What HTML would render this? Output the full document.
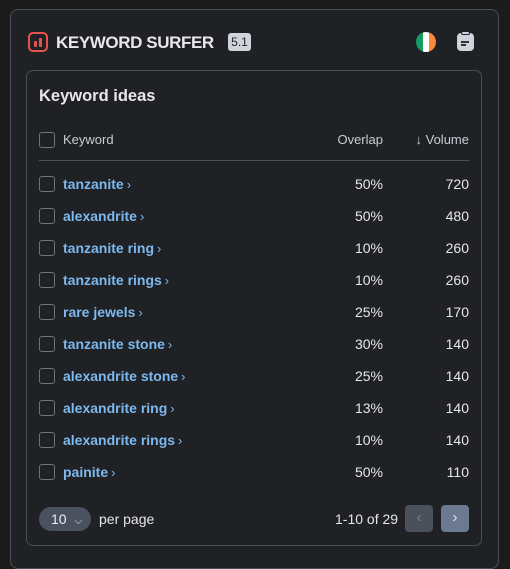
<!DOCTYPE html>
<html><head><style>
*{box-sizing:border-box;margin:0;padding:0}
body{width:510px;height:554px;background:#1b1b1c;font-family:"Liberation Sans",sans-serif;position:relative;overflow:hidden;color:#e5e7eb}
.outer{position:absolute;left:10px;top:9px;width:489px;height:560px;border:1px solid #4a4f57;border-radius:8px;background:#202124}
.logo{position:absolute;left:28px;top:32px;width:20px;height:20px;border:2.5px solid #e5534b;border-radius:5px}
.logo i{position:absolute;bottom:3px;width:2.5px;background:#e5534b;border-radius:1px}
.brand{position:absolute;left:56px;top:33px;font-size:17px;font-weight:bold;color:#e8e8ea;letter-spacing:-0.4px}
.ver{position:absolute;left:228px;top:33px;width:23px;height:18px;background:#cfd4dc;border-radius:3px;color:#222;font-size:12px;text-align:center;line-height:18px}
.flag{position:absolute;left:416px;top:32px;width:20px;height:20px;border-radius:50%;overflow:hidden;display:flex}
.flag span{flex:1}
.clip{position:absolute;left:457px;top:33px;width:17px;height:18px;background:#cfd4dc;border-radius:4px}
.card{position:absolute;left:26px;top:70px;width:456px;height:476px;border:1px solid #4a4f57;border-radius:7px}
.title{position:absolute;left:39px;top:87px;font-size:16.5px;font-weight:bold;color:#e8e8ea}
.cb{position:absolute;left:39px;width:16px;height:16px;border:1.3px solid #6b7280;border-radius:3px}
.row{position:absolute;left:0;width:510px;font-size:14px;height:20px;line-height:20px}
.kw{position:absolute;left:63px;color:#7cb9f0;font-weight:bold}
.kw b{font-weight:normal;color:#7cb9f0;font-size:13px;margin-left:3px}
.ov{position:absolute;right:127px;color:#e5e7eb}
.vo{position:absolute;right:41px;color:#e5e7eb}
.hd{color:#c7ccd4;font-size:13px}
.line{position:absolute;left:39px;top:160px;width:430px;height:1px;background:#4a4f57}
.sel{position:absolute;left:39px;top:507px;width:52px;height:24px;background:#4a5160;border-radius:12px;font-size:14px;line-height:24px;padding-left:12px;color:#eee}
.pp{position:absolute;left:99px;top:511px;font-size:14px;color:#e5e7eb}
.cnt{position:absolute;left:335px;top:511px;font-size:14px;color:#e5e7eb}
.btn{position:absolute;top:505px;width:28px;height:27px;border-radius:4px;text-align:center;line-height:26px;font-size:15px}
</style></head><body>
<div class="outer"></div>
<div class="logo"><i style="left:4px;height:6px"></i><i style="left:9px;height:9px"></i></div>
<div class="brand">KEYWORD SURFER</div>
<div class="ver">5.1</div>
<div class="flag"><span style="background:#169b62"></span><span style="background:#fff"></span><span style="background:#ff883e"></span></div>
<div class="clip"><div style="position:absolute;left:4px;top:-2px;width:9px;height:4px;background:#cfd4dc;border:1px solid #202124;border-radius:2px"></div><div style="position:absolute;left:4px;top:8px;width:8px;height:1.5px;background:#333"></div><div style="position:absolute;left:4px;top:11px;width:5px;height:1.5px;background:#333"></div></div>
<div class="card"></div>
<div class="title">Keyword ideas</div>
<div class="cb" style="top:132px"></div>
<div class="row" style="top:130px"><span class="kw hd" style="font-weight:normal;color:#c7ccd4">Keyword</span><span class="ov hd">Overlap</span><span class="vo hd">↓ Volume</span></div>
<div class="line"></div>

<div class="cb" style="top:176px"></div><div class="row" style="top:174px"><span class="kw">tanzanite<b>›</b></span><span class="ov">50%</span><span class="vo">720</span></div>
<div class="cb" style="top:208px"></div><div class="row" style="top:206px"><span class="kw">alexandrite<b>›</b></span><span class="ov">50%</span><span class="vo">480</span></div>
<div class="cb" style="top:240px"></div><div class="row" style="top:238px"><span class="kw">tanzanite ring<b>›</b></span><span class="ov">10%</span><span class="vo">260</span></div>
<div class="cb" style="top:272px"></div><div class="row" style="top:270px"><span class="kw">tanzanite rings<b>›</b></span><span class="ov">10%</span><span class="vo">260</span></div>
<div class="cb" style="top:304px"></div><div class="row" style="top:302px"><span class="kw">rare jewels<b>›</b></span><span class="ov">25%</span><span class="vo">170</span></div>
<div class="cb" style="top:336px"></div><div class="row" style="top:334px"><span class="kw">tanzanite stone<b>›</b></span><span class="ov">30%</span><span class="vo">140</span></div>
<div class="cb" style="top:368px"></div><div class="row" style="top:366px"><span class="kw">alexandrite stone<b>›</b></span><span class="ov">25%</span><span class="vo">140</span></div>
<div class="cb" style="top:400px"></div><div class="row" style="top:398px"><span class="kw">alexandrite ring<b>›</b></span><span class="ov">13%</span><span class="vo">140</span></div>
<div class="cb" style="top:432px"></div><div class="row" style="top:430px"><span class="kw">alexandrite rings<b>›</b></span><span class="ov">10%</span><span class="vo">140</span></div>
<div class="cb" style="top:464px"></div><div class="row" style="top:462px"><span class="kw">painite<b>›</b></span><span class="ov">50%</span><span class="vo">110</span></div>

<div class="sel">10 <span style="font-size:10px;margin-left:4px">⌵</span></div>
<div class="pp">per page</div>
<div class="cnt">1-10 of 29</div>
<div class="btn" style="left:405px;background:#4b515b;color:#7a808a">‹</div>
<div class="btn" style="left:441px;background:#6b7a90;color:#dfe4ea">›</div>
</body></html>
